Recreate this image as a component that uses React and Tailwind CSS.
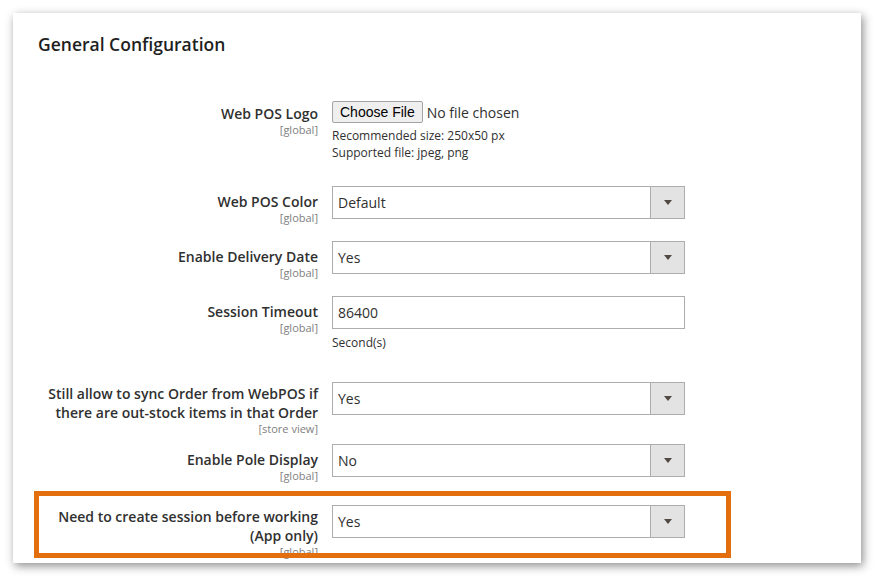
import React from "react";

const font = { fontFamily: '"Open Sans", "Liberation Sans", sans-serif' };

const Arrow = () => (
  <svg width="8" height="5" viewBox="0 0 8 5">
    <path d="M0 0 H8 L4 5 Z" fill="#514943" />
  </svg>
);

const Select = ({ value }) => (
  <div className="flex h-[33px] w-[353px] border border-[#adadad] bg-white">
    <div className="flex flex-1 items-center pl-[5px] text-[14px] text-[#303030]">{value}</div>
    <div className="flex w-[34px] items-center justify-center border-l border-[#adadad] bg-[#e3e3e3]">
      <Arrow />
    </div>
  </div>
);

const Label = ({ lines, scope, pad = "pt-[6px]" }) => (
  <div className={`w-[280px] text-right ${pad}`}>
    {lines.map((l) => (
      <div key={l} className="text-[14px] font-semibold leading-[19px] text-[#303030]">
        {l}
      </div>
    ))}
    <div className="text-[11px] leading-[14px] text-[#808080]">[{scope}]</div>
  </div>
);

const Row = ({ label, scope, pad, className, children }) => (
  <div className={`flex items-start ${className}`}>
    <Label lines={label} scope={scope} pad={pad} />
    <div className="ml-[14px]">{children}</div>
  </div>
);

export default function App() {
  return (
    <div className="h-[578px] w-[875px] bg-white pl-[13px] pt-[13px]" style={font}>
      <div className="relative h-[550px] w-[848px] overflow-hidden bg-white shadow-[2px_3px_9px_rgba(0,0,0,0.45)]">
        <h2 className="pl-[25px] pt-[21px] text-[17.5px] font-semibold leading-[20px] text-[#1f1f1f]">
          General Configuration
        </h2>

        <div className="pl-[25px]">
          <Row label={["Web POS Logo"]} scope="global" pad="pt-[3px]" className="mt-[47px]">
            <div className="flex items-center">
              <button
                className="h-[22px] rounded-[2px] border border-[#a3a3a3] bg-[#efefef] px-[7px] text-[14px] leading-[18px] text-black"
                style={{ fontFamily: '"Liberation Sans", Arial, sans-serif' }}
              >
                Choose File
              </button>
              <span className="ml-[4px] text-[14px] text-[#303030]">No file chosen</span>
            </div>
            <div className="mt-[4px] text-[12px] leading-[17px] text-[#303030]">
              <div>Recommended size: 250x50 px</div>
              <div>Supported file: jpeg, png</div>
            </div>
          </Row>

          <Row label={["Web POS Color"]} scope="global" className="mt-[25px]">
            <Select value="Default" />
          </Row>

          <Row label={["Enable Delivery Date"]} scope="global" className="mt-[16px]">
            <Select value="Yes" />
          </Row>

          <Row label={["Session Timeout"]} scope="global" className="mt-[16px]">
            <div className="flex h-[33px] w-[353px] items-center border border-[#adadad] bg-white pl-[5px] text-[14px] text-[#303030]">
              86400
            </div>
            <div className="mt-[5px] text-[12px] leading-[17px] text-[#303030]">Second(s)</div>
          </Row>

          <Row
            label={["Still allow to sync Order from WebPOS if", "there are out-stock items in that Order"]}
            scope="store view"
            pad="pt-[2px]"
            className="mt-[31px]"
          >
            <Select value="Yes" />
          </Row>

          <Row label={["Enable Pole Display"]} scope="global" className="mt-[8px]">
            <Select value="No" />
          </Row>

          <Row
            label={["Need to create session before working", "(App only)"]}
            scope="global"
            pad="pt-[2px]"
            className="mt-[22px]"
          >
            <Select value="Yes" />
          </Row>
        </div>

        <div className="pointer-events-none absolute left-[21px] top-[478px] h-[67px] w-[697px] border-[5px] border-[#e36e0e]" />
      </div>
    </div>
  );
}
